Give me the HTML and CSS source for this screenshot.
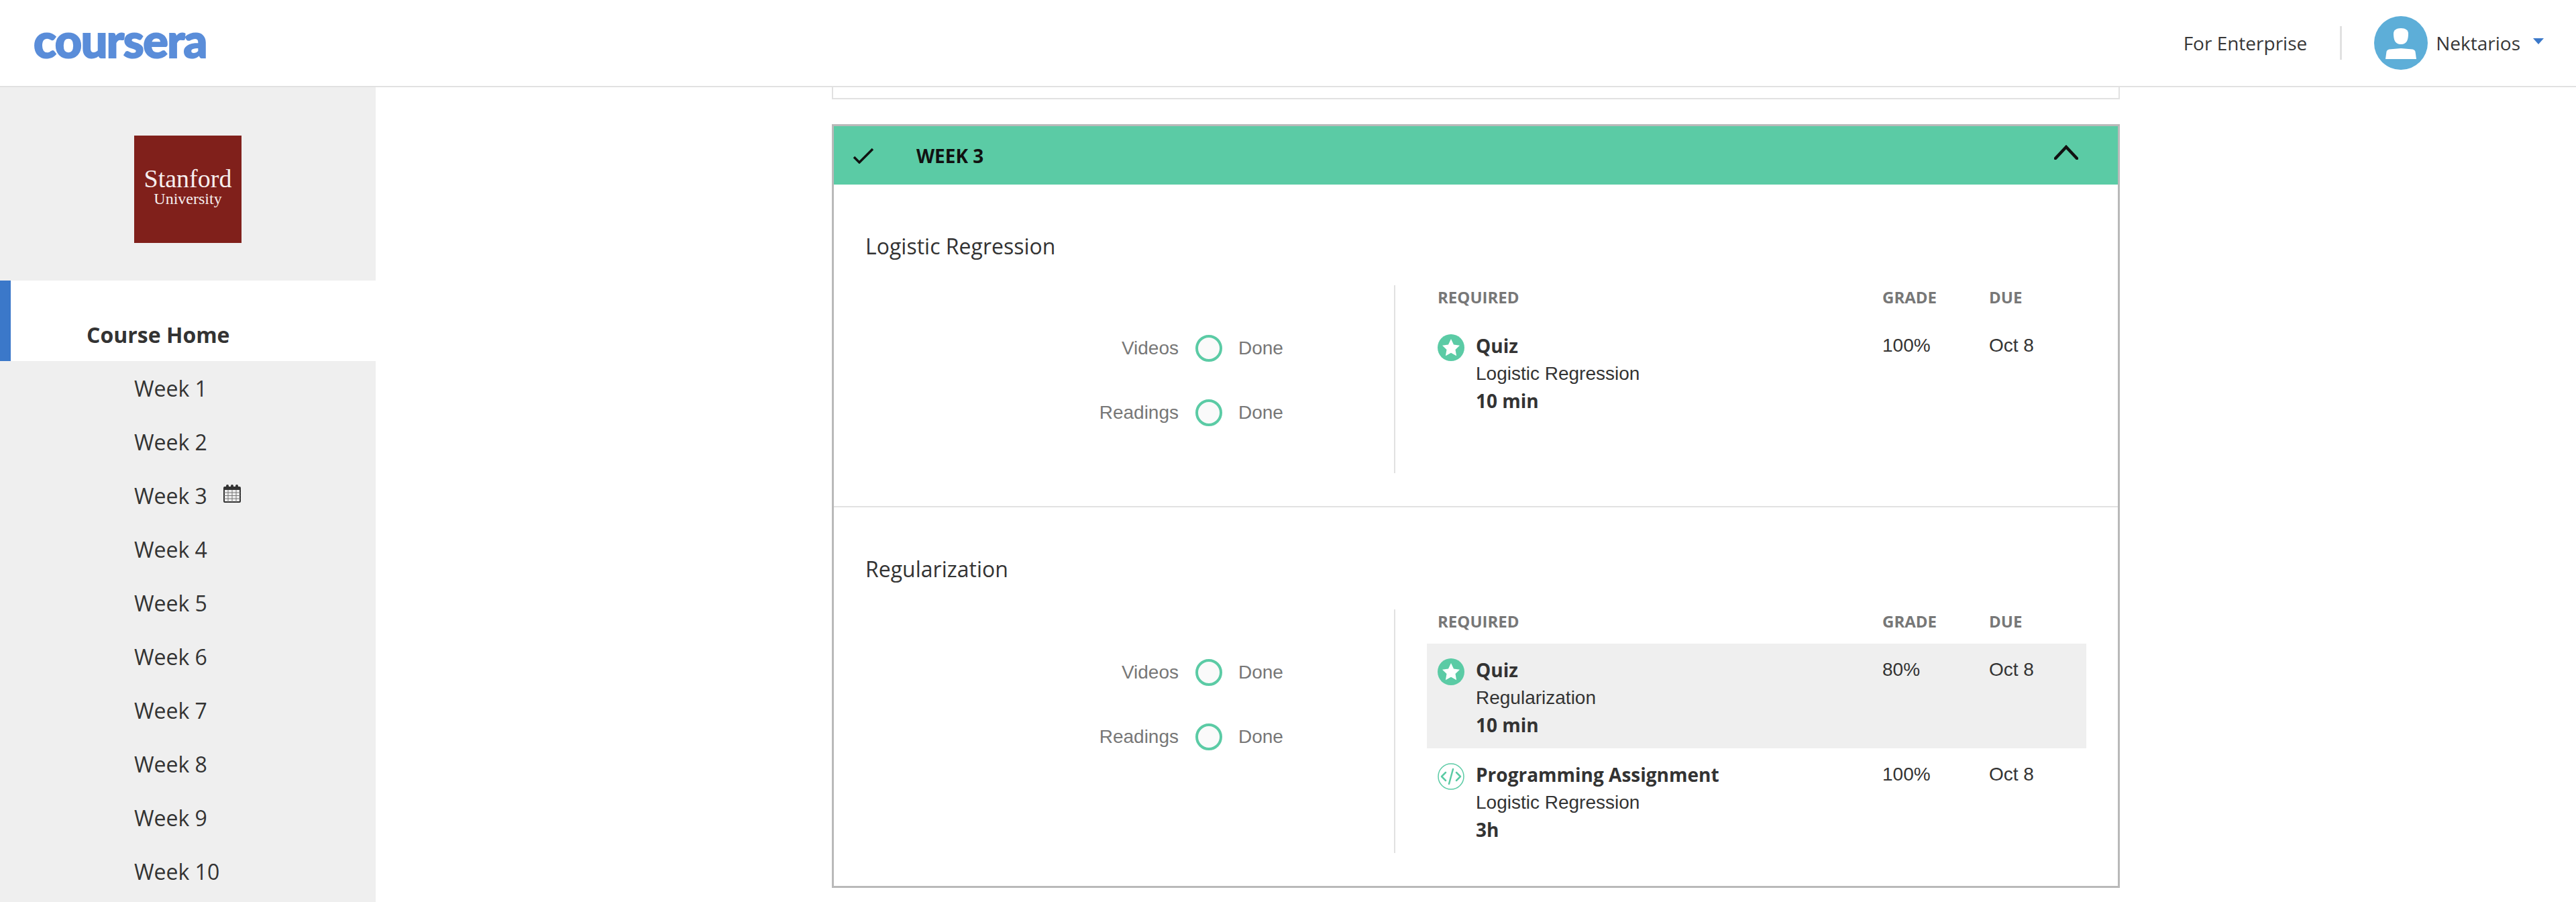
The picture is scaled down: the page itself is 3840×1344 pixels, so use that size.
FILE: index.html
```html
<!DOCTYPE html>
<html lang="en">
<head>
    <meta charset="UTF-8">
    <title>Machine Learning - Home | Coursera</title>
    <link rel="stylesheet" href="styles.css">
</head>
<body>
    <header class="topbar">
        <a class="brand">coursera</a>
        <nav class="topnav">
            <a class="topnav-link">For Enterprise</a>
            <span class="topnav-sep"></span>
            <svg class="avatar" viewBox="0 0 80 80">
                <circle cx="40" cy="40" r="40" fill="#5daed8"/>
                <path d="M40 18c-7 0-11 3-11 8 0 9 2 16 11 16s11-7 11-16c0-5-4-8-11-8z" fill="#fff"/>
                <path d="M17 64l1.500-11c.5-2 2-3 4-3.500L40 48l17.500 1.500c2 .5 3.500 1.500 4 3.500l1.500 11z" fill="#fff"/>
            </svg>
            <a class="topnav-user">Nektarios</a>
            <span class="caret"></span>
        </nav>
    </header>

    <div class="page">
        <aside class="sidebar">
            <div class="partner">
                <div class="partner-logo">
                    <span class="partner-name">Stanford</span>
                    <span class="partner-sub">University</span>
                </div>
            </div>
            <a class="side-home">Course Home</a>
            <ul class="side-weeks">
                <li>Week 1</li>
                <li>Week 2</li>
                <li>Week 3
                    <svg class="cal" viewBox="0 0 26 28">
                        <path d="M1 5h3V3a2 2 0 0 1 4 0v2h3V3a2 2 0 0 1 4 0v2h3V3a2 2 0 0 1 4 0v2h3v4H1z" fill="#333"/>
                        <rect x="1" y="5" width="24" height="22" rx="1" fill="none" stroke="#333" stroke-width="2"/>
                        <path d="M1 13h24M1 17.500h24M1 22h24M7 9v18M13 9v18M19 9v18" stroke="#777" stroke-width="1" fill="none"/>
                    </svg>
                </li>
                <li>Week 4</li>
                <li>Week 5</li>
                <li>Week 6</li>
                <li>Week 7</li>
                <li>Week 8</li>
                <li>Week 9</li>
                <li>Week 10</li>
            </ul>
        </aside>

        <main class="content">
            <div class="prev-card"></div>

            <section class="week-card">
                <div class="week-head">
                    <svg class="week-check" viewBox="0 0 32 24">
                        <path d="M2 14l8 8L30 2" fill="none" stroke="#111" stroke-width="3.500"/>
                    </svg>
                    <span class="week-title">WEEK 3</span>
                    <svg class="week-chevron" viewBox="0 0 36 22">
                        <path d="M2 20L18 3l16 17" fill="none" stroke="#111" stroke-width="4.500" stroke-linecap="round"/>
                    </svg>
                </div>

                <div class="lesson">
                    <h3 class="lesson-title">Logistic Regression</h3>
                    <div class="lesson-body">
                        <div class="progress">
                            <div class="progress-row">
                                <span class="progress-label">Videos</span>
                                <span class="ring"></span>
                                <span class="progress-state">Done</span>
                            </div>
                            <div class="progress-row">
                                <span class="progress-label">Readings</span>
                                <span class="ring"></span>
                                <span class="progress-state">Done</span>
                            </div>
                        </div>
                        <div class="items">
                            <div class="items-head">
                                <span class="col-name">REQUIRED</span>
                                <span class="col-grade">GRADE</span>
                                <span class="col-due">DUE</span>
                            </div>
                            <div class="item">
                                <svg class="item-icon" viewBox="0 0 40 40">
                                    <circle cx="20" cy="20" r="20" fill="#5bcba5"/>
                                    <path d="M20 7l4 8.500 9 1.200-6.500 6.300 1.600 9.200L20 27.800l-8.100 4.400 1.600-9.200L7 16.700l9-1.200z" fill="#fff"/>
                                </svg>
                                <div class="col-name item-text">
                                    <div class="item-name">Quiz</div>
                                    <div class="item-sub">Logistic Regression</div>
                                    <div class="item-time">10 min</div>
                                </div>
                                <span class="col-grade item-val">100%</span>
                                <span class="col-due item-val">Oct 8</span>
                            </div>
                        </div>
                    </div>
                </div>

                <div class="lesson lesson-last">
                    <h3 class="lesson-title">Regularization</h3>
                    <div class="lesson-body">
                        <div class="progress">
                            <div class="progress-row">
                                <span class="progress-label">Videos</span>
                                <span class="ring"></span>
                                <span class="progress-state">Done</span>
                            </div>
                            <div class="progress-row">
                                <span class="progress-label">Readings</span>
                                <span class="ring"></span>
                                <span class="progress-state">Done</span>
                            </div>
                        </div>
                        <div class="items">
                            <div class="items-head">
                                <span class="col-name">REQUIRED</span>
                                <span class="col-grade">GRADE</span>
                                <span class="col-due">DUE</span>
                            </div>
                            <div class="item item-hover">
                                <svg class="item-icon" viewBox="0 0 40 40">
                                    <circle cx="20" cy="20" r="20" fill="#5bcba5"/>
                                    <path d="M20 7l4 8.500 9 1.200-6.500 6.300 1.600 9.200L20 27.800l-8.100 4.400 1.600-9.200L7 16.700l9-1.200z" fill="#fff"/>
                                </svg>
                                <div class="col-name item-text">
                                    <div class="item-name">Quiz</div>
                                    <div class="item-sub">Regularization</div>
                                    <div class="item-time">10 min</div>
                                </div>
                                <span class="col-grade item-val">80%</span>
                                <span class="col-due item-val">Oct 8</span>
                            </div>
                            <div class="item">
                                <svg class="item-icon" viewBox="0 0 40 40">
                                    <circle cx="20" cy="20" r="19" fill="none" stroke="#5bcba5" stroke-width="1.500"/>
                                    <path d="M12 14l-6 6 6 6M28 14l6 6-6 6M23 9l-6 22" fill="none" stroke="#5bcba5" stroke-width="2.500" stroke-linecap="round" stroke-linejoin="round"/>
                                </svg>
                                <div class="col-name item-text">
                                    <div class="item-name">Programming Assignment</div>
                                    <div class="item-sub">Logistic Regression</div>
                                    <div class="item-time">3h</div>
                                </div>
                                <span class="col-grade item-val">100%</span>
                                <span class="col-due item-val">Oct 8</span>
                            </div>
                        </div>
                    </div>
                </div>
            </section>
        </main>
    </div>
</body>
</html>
```

FILE: styles.css
```css
html, body {
    height: 100%;
}
body {
    margin: 0;
    overflow: hidden;
    display: flex;
    flex-direction: column;
    background-color: #fff;
    color: #333;
    font-family: "Open Sans", sans-serif;
}

/* top bar */
.topbar {
    height: 128px;
    flex: none;
    display: flex;
    align-items: center;
    justify-content: space-between;
    border-bottom: 2px solid #e1e1e1;
    padding: 0 48px 0 50px;
}
.brand {
    font-family: Lato, sans-serif;
    font-weight: 900;
    font-size: 70px;
    line-height: 1;
    letter-spacing: -1.500px;
    color: #5a8dd9;
    -webkit-text-stroke: 2px #5a8dd9;
    margin-top: -10px;
}
.topnav {
    display: flex;
    align-items: center;
    font-size: 28px;
    color: #373737;
}
.topnav-sep {
    width: 3px;
    height: 50px;
    background-color: #e1e1e1;
    margin: 0 48px 0 49px;
}
.avatar {
    width: 80px;
    height: 80px;
}
.topnav-user {
    margin-left: 12px;
}
.caret {
    width: 0;
    height: 0;
    margin-left: 19px;
    margin-top: -6px;
    border-left: 8px solid transparent;
    border-right: 8px solid transparent;
    border-top: 9px solid #3b78c9;
}

/* sidebar */
.page {
    flex: 1;
    display: flex;
    min-height: 0;
}
.sidebar {
    width: 560px;
    flex: none;
    background-color: #efefef;
}
.partner {
    height: 288px;
    box-sizing: border-box;
    padding-top: 72px;
    display: flex;
    justify-content: center;
}
.partner-logo {
    width: 160px;
    height: 160px;
    box-sizing: border-box;
    padding-bottom: 10px;
    background-color: #80201b;
    color: #f6eeee;
    font-family: "Liberation Serif", serif;
    display: flex;
    flex-direction: column;
    align-items: center;
    justify-content: center;
}
.partner-name {
    font-size: 38px;
    line-height: 38px;
}
.partner-sub {
    font-size: 24px;
    line-height: 22px;
}
.side-home {
    height: 120px;
    box-sizing: border-box;
    padding-top: 40px;
    display: flex;
    align-items: center;
    background-color: #fff;
    border-left: 16px solid #3b78c9;
    padding-left: 113px;
    font-size: 32px;
    font-weight: 700;
    color: #333;
}
.side-weeks {
    list-style: none;
    margin: 0;
    padding: 0;
}
.side-weeks li {
    height: 80px;
    display: flex;
    align-items: center;
    padding-left: 200px;
    font-size: 32px;
    color: #333;
}
.cal {
    width: 26px;
    height: 28px;
    margin-left: 24px;
    margin-top: -6px;
}

/* week card */
.content {
    flex: 1;
    padding-left: 680px;
    min-width: 0;
}
.prev-card {
    width: 1920px;
    height: 18px;
    box-sizing: border-box;
    border: 2px solid #e1e1e1;
    border-top: none;
}
.week-card {
    width: 1920px;
    box-sizing: border-box;
    margin-top: 37px;
    border: 3px solid #b9b9b9;
}
.week-head {
    height: 87px;
    display: flex;
    align-items: center;
    background-color: #5bcba5;
    padding: 0 59px 0 28px;
    color: #111;
}
.week-check {
    width: 32px;
    height: 24px;
}
.week-title {
    margin-left: 63px;
    font-size: 28px;
    font-weight: 700;
    flex: 1;
}
.week-chevron {
    width: 36px;
    height: 22px;
    margin-top: -9px;
}

.lesson {
    height: 481px;
    box-sizing: border-box;
    padding: 70px 47px 0;
    border-bottom: 2px solid #e1e1e1;
}
.lesson-last {
    border-bottom: none;
    height: 564px;
}
.lesson-title {
    margin: 0;
    font-size: 32px;
    font-weight: 400;
    line-height: 44px;
    color: #333;
}
.lesson-body {
    display: flex;
    margin-top: 36px;
}
.lesson-last .lesson-body {
    margin-top: 38px;
}
.progress {
    width: 788px;
    flex: none;
    padding-top: 74px;
}
.progress-row {
    height: 40px;
    display: flex;
    align-items: center;
    margin-bottom: 56px;
    font-family: "Liberation Sans", sans-serif;
    font-size: 28px;
    color: #777;
}
.progress-label {
    width: 467px;
    text-align: right;
}
.ring {
    width: 40px;
    height: 40px;
    box-sizing: border-box;
    margin-left: 25px;
    border: 4px solid #5bcba5;
    border-radius: 50%;
    background-color: #fafafa;
}
.progress-state {
    margin-left: 24px;
}

.items {
    flex: 1;
    min-height: 280px;
    box-sizing: border-box;
    border-left: 2px solid #e1e1e1;
    padding-left: 47px;
}
.items-head {
    display: flex;
    height: 34px;
    margin-bottom: 17px;
    align-items: center;
    font-size: 24px;
    font-weight: 700;
    color: #777;
    padding-left: 16px;
}
.col-name {
    flex: 1;
    min-width: 0;
}
.col-grade {
    width: 159px;
    flex: none;
}
.col-due {
    width: 145px;
    flex: none;
}
.item {
    display: flex;
    height: 156px;
    box-sizing: border-box;
    padding: 22px 0 0 16px;
}
.item-hover {
    background-color: #efefef;
}
.item-icon {
    width: 40px;
    height: 40px;
    flex: none;
}
.item-text {
    margin-left: 17px;
    margin-top: -3px;
}
.item-name,
.item-time {
    font-size: 28px;
    font-weight: 700;
    line-height: 41px;
    color: #333;
}
.item-sub {
    font-family: "Liberation Sans", sans-serif;
    font-size: 28px;
    line-height: 41px;
    color: #333;
}
.item-val {
    font-family: "Liberation Sans", sans-serif;
    font-size: 28px;
    line-height: 34px;
    color: #333;
}
```
